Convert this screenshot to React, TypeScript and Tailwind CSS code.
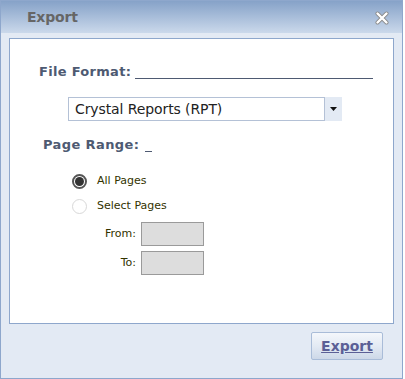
import React from "react";

export default function App() {
  const font = { fontFamily: '"DejaVu Sans", Verdana, sans-serif' };
  return (
    <div className="w-[405px] h-[379px] bg-white" style={font}>
      <div className="w-[403px] h-[379px] border border-[#8ea7cc] bg-[#e3eaf4] flex flex-col">
        <div className="h-[32px] shrink-0 bg-gradient-to-b from-[#86a2c8] to-[#cbd9eb] flex items-center justify-between pl-[26px] pr-[13px]">
          <span className="text-[14px] font-bold text-[#666666] tracking-[-0.2px]">Export</span>
          <svg width="14" height="14" viewBox="0 0 14 14" className="mt-[1px]">
            <path d="M2.5 2.5 L11.5 11.5 M11.5 2.5 L2.5 11.5" stroke="#8a8a8a" strokeWidth="4" strokeLinecap="round" />
            <path d="M2.5 2.5 L11.5 11.5 M11.5 2.5 L2.5 11.5" stroke="#ffffff" strokeWidth="2.4" strokeLinecap="round" />
          </svg>
        </div>
        <div className="px-[8px] pt-[5px]">
          <div className="h-[286px] bg-white border border-[#8ea7cc] flex flex-col">
            <div className="flex items-end mt-[25px] ml-[29px]">
              <span className="text-[13px] font-bold text-[#4e5a72] leading-[16px] tracking-[0.3px]">File Format:</span>
              <div className="ml-[4px] w-[238px] h-[1px] bg-[#4e5a72] mb-[1px]" />
            </div>
            <div className="flex mt-[17px] ml-[58px] h-[24px]">
              <div className="w-[257px] border border-[#b4c1d6] flex items-center pl-[6px] text-[14px] text-[#222222] tracking-[-0.1px]">
                Crystal Reports (RPT)
              </div>
              <div className="w-[17px] bg-[#e3eaf4] flex items-center justify-center">
                <svg width="7" height="4" viewBox="0 0 7 4"><path d="M0 0 H7 L3.5 4 Z" fill="#111" /></svg>
              </div>
            </div>
            <div className="flex items-end mt-[16px] ml-[33px]">
              <span className="text-[13px] font-bold text-[#4e5a72] leading-[16px] tracking-[0.4px]">Page Range:</span>
              <div className="ml-[6px] w-[7px] h-[1px] bg-[#4e5a72] mb-[1px]" />
            </div>
            <div className="flex flex-col ml-[62px] mt-[20px] gap-[9px]">
              <div className="flex items-center h-[16px]">
                <div className="w-[15px] h-[15px] rounded-full border-[2px] border-[#555] flex items-center justify-center bg-white">
                  <div className="w-[9px] h-[9px] rounded-full bg-[#333]" />
                </div>
                <span className="ml-[10px] text-[11px] text-[#333300]">All Pages</span>
              </div>
              <div className="flex items-center h-[16px]">
                <div className="w-[15px] h-[15px] rounded-full border border-[#d8d8d8] bg-white" />
                <span className="ml-[10px] text-[11px] text-[#333300]">Select Pages</span>
              </div>
            </div>
            <div className="flex flex-col mt-[8px] gap-[5px]">
              <div className="flex items-center">
                <span className="w-[131px] text-right pr-[5px] text-[11px] text-[#333300]">From:</span>
                <div className="w-[63px] h-[24px] bg-[#dddddd] border border-[#9a9a9a]" />
              </div>
              <div className="flex items-center">
                <span className="w-[131px] text-right pr-[5px] text-[11px] text-[#333300]">To:</span>
                <div className="w-[63px] h-[24px] bg-[#dddddd] border border-[#9a9a9a]" />
              </div>
            </div>
          </div>
        </div>
        <div className="flex justify-end pr-[19px] pt-[8px]">
          <button className="w-[72px] h-[28px] rounded-[2px] border border-[#a9bcd8] bg-gradient-to-b from-[#f4f7fb] via-[#e3eaf4] to-[#cdd8e8] text-[14px] font-bold text-[#5b5f96] underline">
            Export
          </button>
        </div>
      </div>
    </div>
  );
}
